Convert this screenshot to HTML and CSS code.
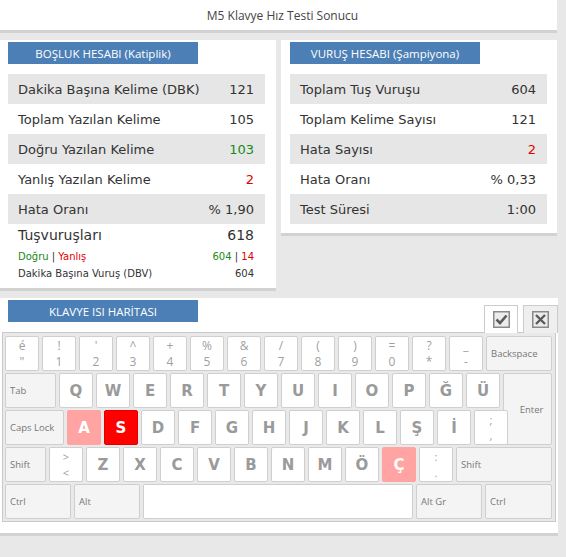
FILE: index.html
```html
<!DOCTYPE html>
<html lang="tr">
<head>
<meta charset="utf-8">
<title>M5 Klavye Hız Testi Sonucu</title>
<link rel="stylesheet" href="styles.css">
</head>
<body>
<div class="title">M5 Klavye Hız Testi Sonucu</div>

<div class="panels">
  <div class="panel panel-left">
    <div class="hbar">BOŞLUK HESABI (Katiplik)</div>
    <div class="rows">
      <div class="row gray"><span>Dakika Başına Kelime (DBK)</span><span>121</span></div>
      <div class="row"><span>Toplam Yazılan Kelime</span><span>105</span></div>
      <div class="row gray"><span>Doğru Yazılan Kelime</span><span class="green">103</span></div>
      <div class="row"><span>Yanlış Yazılan Kelime</span><span class="red">2</span></div>
      <div class="row gray"><span>Hata Oranı</span><span>% 1,90</span></div>
    </div>
    <div class="extra">
      <div class="xrow big"><span>Tuşvuruşları</span><span>618</span></div>
      <div class="xrow small first"><span><span class="green">Doğru</span> | <span class="red">Yanlış</span></span><span><span class="green">604</span> | <span class="red">14</span></span></div>
      <div class="xrow small"><span>Dakika Başına Vuruş (DBV)</span><span>604</span></div>
    </div>
  </div>
  <div class="panel panel-right">
    <div class="hbar">VURUŞ HESABI (Şampiyona)</div>
    <div class="rows">
      <div class="row gray"><span>Toplam Tuş Vuruşu</span><span>604</span></div>
      <div class="row"><span>Toplam Kelime Sayısı</span><span>121</span></div>
      <div class="row gray"><span>Hata Sayısı</span><span class="red">2</span></div>
      <div class="row"><span>Hata Oranı</span><span>% 0,33</span></div>
      <div class="row gray"><span>Test Süresi</span><span>1:00</span></div>
    </div>
  </div>
</div>

<div class="kbpanel">
  <div class="kbhead">
    <div class="hbar">KLAVYE ISI HARİTASI</div>
    <div class="tabs">
      <div class="tab tab-check">
        <svg width="17" height="17" viewBox="0 0 17 17"><rect x="0.75" y="0.75" width="15.5" height="15.5" fill="#ececec" stroke="#8a8a8a" stroke-width="1.5"/><path d="M3.5 8.5 L7 12 L13.5 4.5" fill="none" stroke="#5a5a5a" stroke-width="2.6"/></svg>
      </div>
      <div class="tab tab-x">
        <svg width="17" height="17" viewBox="0 0 17 17"><rect x="0.75" y="0.75" width="15.5" height="15.5" fill="#ececec" stroke="#8a8a8a" stroke-width="1.5"/><path d="M4 4 L13 13 M13 4 L4 13" fill="none" stroke="#5a5a5a" stroke-width="2.4"/></svg>
      </div>
    </div>
  </div>
  <div class="keyboard">
    <div class="krow">
      <div class="key dual"><span>é</span><span>"</span></div>
      <div class="key dual"><span>!</span><span>1</span></div>
      <div class="key dual"><span>'</span><span>2</span></div>
      <div class="key dual"><span>^</span><span>3</span></div>
      <div class="key dual"><span>+</span><span>4</span></div>
      <div class="key dual"><span>%</span><span>5</span></div>
      <div class="key dual"><span>&amp;</span><span>6</span></div>
      <div class="key dual"><span>/</span><span>7</span></div>
      <div class="key dual"><span>(</span><span>8</span></div>
      <div class="key dual"><span>)</span><span>9</span></div>
      <div class="key dual"><span>=</span><span>0</span></div>
      <div class="key dual"><span>?</span><span>*</span></div>
      <div class="key dual"><span>_</span><span>-</span></div>
      <div class="key mod w-bksp">Backspace</div>
    </div>
    <div class="krow">
      <div class="key mod w-tab">Tab</div>
      <div class="key letter">Q</div>
      <div class="key letter">W</div>
      <div class="key letter">E</div>
      <div class="key letter">R</div>
      <div class="key letter">T</div>
      <div class="key letter">Y</div>
      <div class="key letter">U</div>
      <div class="key letter">I</div>
      <div class="key letter">O</div>
      <div class="key letter">P</div>
      <div class="key letter">Ğ</div>
      <div class="key letter">Ü</div>
      <div class="key mod enter">Enter</div>
    </div>
    <div class="krow">
      <div class="key mod w-caps">Caps Lock</div>
      <div class="key letter heat1">A</div>
      <div class="key letter heat2">S</div>
      <div class="key letter">D</div>
      <div class="key letter">F</div>
      <div class="key letter">G</div>
      <div class="key letter">H</div>
      <div class="key letter">J</div>
      <div class="key letter">K</div>
      <div class="key letter">L</div>
      <div class="key letter">Ş</div>
      <div class="key letter">İ</div>
      <div class="key dual wide"><span>;</span><span>,</span></div>
    </div>
    <div class="krow">
      <div class="key mod w-lshift">Shift</div>
      <div class="key dual wide"><span>&gt;</span><span>&lt;</span></div>
      <div class="key letter">Z</div>
      <div class="key letter">X</div>
      <div class="key letter">C</div>
      <div class="key letter">V</div>
      <div class="key letter">B</div>
      <div class="key letter">N</div>
      <div class="key letter">M</div>
      <div class="key letter">Ö</div>
      <div class="key letter heat1">Ç</div>
      <div class="key dual wide"><span>:</span><span>.</span></div>
      <div class="key mod w-rshift">Shift</div>
    </div>
    <div class="krow">
      <div class="key mod w-ctrl">Ctrl</div>
      <div class="key mod w-alt">Alt</div>
      <div class="key space"></div>
      <div class="key mod w-alt">Alt Gr</div>
      <div class="key mod w-rctrl">Ctrl</div>
    </div>
  </div>
</div>
</body>
</html>
```
FILE: styles.css
```css
html, body {
  margin: 0;
  padding: 0;
}
body {
  background: #e8e8e8;
  width: 566px;
  height: 557px;
  overflow: hidden;
  font-family: "DejaVu Sans", Verdana, sans-serif;
  color: #333;
}
.title {
  width: 557px;
  height: 33px;
  background: #fff;
  border-bottom: 3px solid #d2d2d2;
  box-sizing: border-box;
  display: flex;
  align-items: center;
  justify-content: center;
  padding-left: 8px;
  font-family: "Open Sans", sans-serif;
  font-size: 12px;
  color: #444;
}
.panels {
  display: flex;
  gap: 5px;
  align-items: flex-start;
  margin-top: 7px;
  width: 557px;
}
.panel {
  width: 276px;
  background: #fff;
  border-bottom: 3px solid #d2d2d2;
  box-sizing: border-box;
}
.panel-left {
  padding: 2px 11px 0 8px;
}
.panel-right {
  padding: 2px 10px 9px 9px;
}
.hbar {
  width: 190px;
  height: 22px;
  background: #4c7fb6;
  color: #fff;
  font-family: "Open Sans", sans-serif;
  font-size: 11.5px;
  display: flex;
  align-items: center;
  justify-content: center;
}
.rows {
  margin-top: 10px;
}
.row {
  height: 30px;
  display: flex;
  align-items: center;
  justify-content: space-between;
  padding: 0 11px 0 10px;
  font-size: 13px;
  color: #333;
}
.row.gray {
  background: #e6e6e6;
}
.green { color: #198a19; }
.red { color: #e00000; }
.extra {
  padding: 0 11px 6px 10px;
}
.xrow {
  display: flex;
  justify-content: space-between;
  align-items: center;
}
.xrow.big {
  font-size: 14px;
  height: 22px;
}
.xrow.small {
  font-size: 10px;
  height: 17px;
}
.xrow.small.first {
  margin-top: 2px;
}

/* keyboard */
.kbpanel {
  margin-top: 7px;
  width: 558px;
  background: #fff;
  border-bottom: 3px solid #d2d2d2;
  padding: 0 0 11px 2px;
  box-sizing: border-box;
}
.kbhead {
  display: flex;
  justify-content: space-between;
  align-items: flex-end;
  height: 34px;
}
.kbhead .hbar {
  margin: 2px 0 0 6px;
  align-self: flex-start;
}
.tabs {
  display: flex;
  gap: 5px;
}
.tab {
  height: 28px;
  border: 1px solid #cccccc;
  border-bottom: none;
  box-sizing: border-box;
  display: flex;
  align-items: center;
  justify-content: center;
  margin-bottom: -1px;
  position: relative;
}
.tab-check {
  width: 34px;
  background: #fff;
}
.tab-x {
  width: 35px;
  background: #efefef;
}
.keyboard {
  width: 554px;
  border: 1px solid #c9c9c9;
  background: #e9e9e9;
  box-sizing: border-box;
  padding: 3px 3px 2px 2px;
  display: flex;
  flex-direction: column;
  gap: 2px;
}
.krow {
  display: flex;
  gap: 3px;
  align-items: flex-start;
  height: 35px;
}
.key {
  width: 34px;
  height: 35px;
  box-sizing: border-box;
  border: 1px solid #cfcfcf;
  border-radius: 2px;
  background: #fff;
  display: flex;
  align-items: center;
  justify-content: center;
  flex: none;
}
.key.letter {
  font-family: "DejaVu Sans", Verdana, sans-serif;
  font-weight: bold;
  font-size: 15px;
  color: #9a9a9a;
}
.key.dual {
  flex-direction: column;
  font-family: "Open Sans", sans-serif;
  font-size: 12px;
  line-height: 16px;
  color: #a0a0a0;
}
.key.dual.wide {
  line-height: 16px;
  font-size: 11px;
}
.key.mod {
  background: #f4f4f4;
  justify-content: flex-start;
  padding-left: 4px;
  font-family: "Open Sans", sans-serif;
  font-size: 9.5px;
  color: #777;
}
.heat1 {
  background: #ffa3a3 !important;
  border-color: #ffa3a3 !important;
  color: #fff !important;
}
.heat2 {
  background: #ff0000 !important;
  border-color: #e00000 !important;
  color: #fff !important;
}
.w-bksp { width: 66px; }
.w-tab { width: 51px; }
.w-caps { width: 59px; }
.w-lshift { width: 41px; }
.w-rshift { width: 96px; }
.w-ctrl { width: 66px; }
.w-alt { width: 66px; }
.w-rctrl { width: 67px; }
.space { width: 270px; }
.key.enter {
  width: 49px;
  height: 72px;
  margin-bottom: -37px;
  justify-content: center;
  padding-left: 8px;
}
```
